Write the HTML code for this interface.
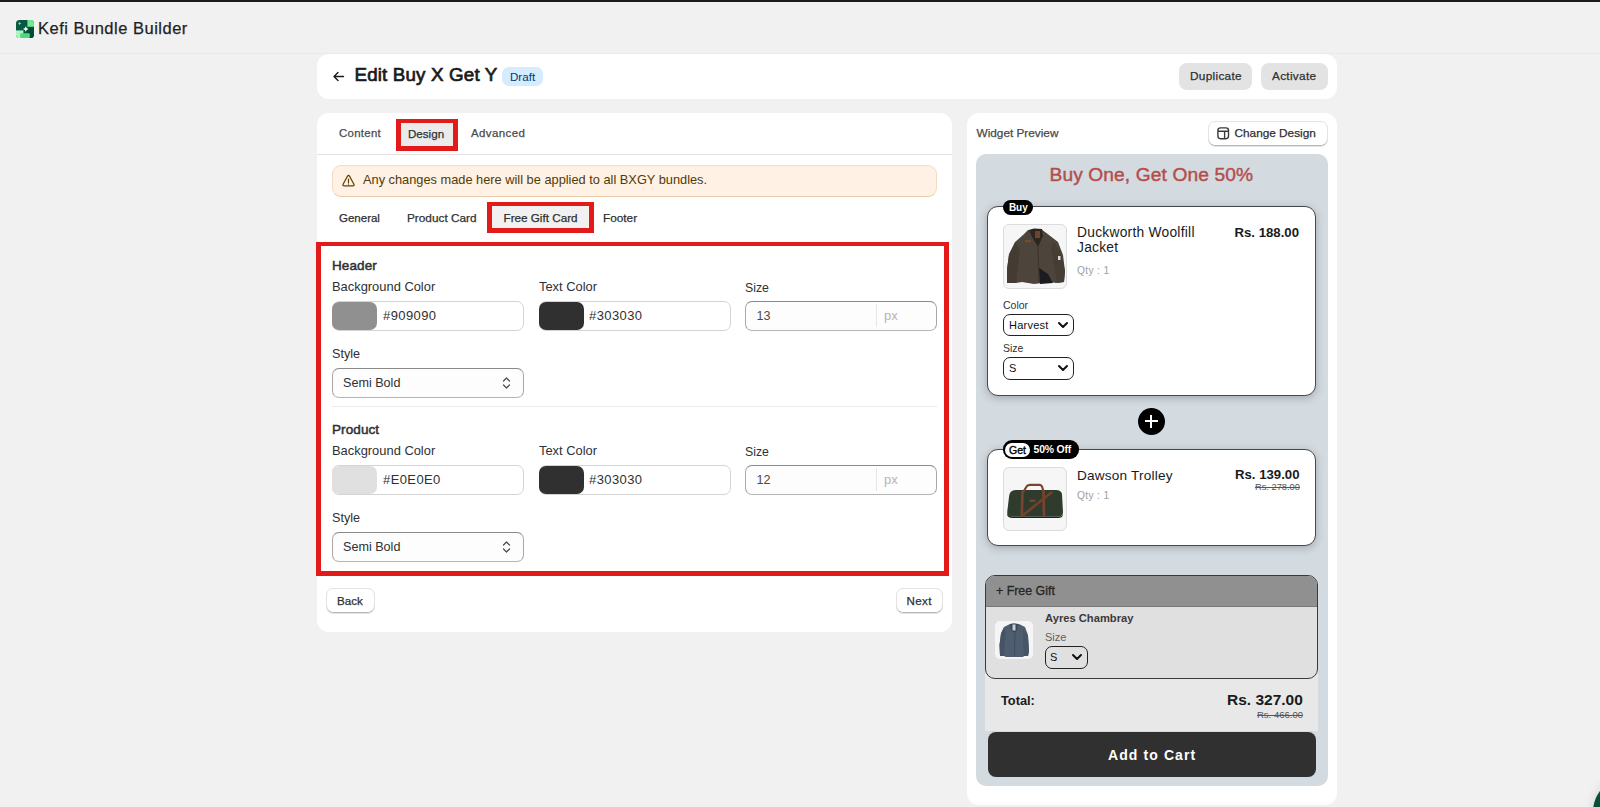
<!DOCTYPE html>
<html><head><meta charset="utf-8">
<style>
*{box-sizing:border-box;margin:0;padding:0}
html,body{width:1600px;height:807px;overflow:hidden;background:#f1f1f1;font-family:"Liberation Sans",sans-serif;color:#303030;position:relative}
.a{position:absolute}
.t{position:absolute;white-space:nowrap;line-height:1}
.card{position:absolute;background:#fff;border-radius:12px}
.med{-webkit-text-stroke:0.25px currentColor}
.inp{position:absolute;background:#fff;border:1px solid #d4d4d4;border-radius:7px}
.sw{position:absolute;border-radius:7px}
.sel{position:absolute;background:#fdfdfd;border:1px solid #8a8a8a;border-bottom-color:#b5b5b5;border-left-color:#a8a8a8;border-right-color:#a8a8a8;border-radius:7px}
.red{position:absolute;border:5px solid #e21a1a;border-top-width:4px}
</style></head>
<body>
<!-- top bar -->
<div class="a" style="left:0;top:0;width:1600px;height:2px;background:#1b1b1b"></div>
<!-- app header -->
<svg class="a" style="left:16px;top:20px" width="18" height="18" viewBox="0 0 18 18">
  <defs><clipPath id="lc"><rect x="0" y="0" width="18" height="18" rx="3.6"/></clipPath></defs>
  <g clip-path="url(#lc)">
    <rect width="18" height="18" fill="#075a3f"/>
    <rect x="11.4" y="6.8" width="6.6" height="11.2" fill="#034c34"/>
    <rect x="11.4" y="0" width="6.6" height="6.8" fill="#72e899"/>
    <rect x="0" y="10.4" width="7.4" height="7.6" fill="#aef3c3"/>
    <rect x="4.2" y="13.3" width="9.6" height="4.7" rx="1" fill="#4fd97d"/>
    <path d="M9.8 6.2 L10.7 8.1 L12.6 9 L10.7 9.9 L9.8 11.8 L8.9 9.9 L7 9 L8.9 8.1Z" fill="#f4fbf6"/>
    <path d="M3.6 1.6 L4.1 3 L5.5 3.5 L4.1 4 L3.6 5.4 L3.1 4 L1.7 3.5 L3.1 3Z" fill="#9fd6b8"/>
  </g>
</svg>
<div class="t med" style="left:38px;top:20.3px;font-size:16.5px;letter-spacing:0.5px;color:#1f1f1f">Kefi Bundle Builder</div>
<div class="a" style="left:0;top:53px;width:1600px;height:1px;background:#e9e9e9"></div>

<!-- header card -->
<div class="card" style="left:317px;top:54px;width:1020px;height:45px"></div>
<svg class="a" style="left:332px;top:70px" width="13" height="13" viewBox="0 0 13 13"><path d="M11.5 6.5H2M6 2.5L2 6.5L6 10.5" fill="none" stroke="#1a1a1a" stroke-width="1.4" stroke-linecap="round" stroke-linejoin="round"/></svg>
<div class="t" style="left:354.5px;top:66px;font-size:18.8px;letter-spacing:0.15px;color:#1a1a1a;-webkit-text-stroke:0.7px #1a1a1a">Edit Buy X Get Y</div>
<div class="a" style="left:502px;top:67px;width:41px;height:19px;background:#d5ebff;border-radius:7px"></div>
<div class="t" style="left:510px;top:70.7px;font-size:11.6px;color:#08366a">Draft</div>
<div class="a" style="left:1179px;top:63px;width:73px;height:27px;background:#e3e3e3;border-radius:8px"></div>
<div class="t med" style="left:1190px;top:70.6px;font-size:11.8px;letter-spacing:0.3px;color:#303030">Duplicate</div>
<div class="a" style="left:1261px;top:63px;width:67px;height:27px;background:#e3e3e3;border-radius:8px"></div>
<div class="t med" style="left:1272px;top:70.6px;font-size:11.8px;letter-spacing:0.3px;color:#303030">Activate</div>

<!-- left card -->
<div class="card" style="left:317px;top:113px;width:635px;height:519px"></div>
<div class="t med" style="left:339px;top:128.3px;font-size:11.4px;letter-spacing:0.3px;color:#4a4a4a">Content</div>
<div class="a" style="left:400px;top:123px;width:54px;height:24px;background:#ebebeb"></div>
<div class="red" style="left:396px;top:119px;width:62px;height:32px"></div>
<div class="t med" style="left:408px;top:128.4px;font-size:11.6px;color:#303030">Design</div>
<div class="t med" style="left:471px;top:128.3px;font-size:11.5px;letter-spacing:0.4px;color:#4a4a4a">Advanced</div>
<div class="a" style="left:317px;top:154px;width:635px;height:1px;background:#e3e3e3"></div>

<!-- banner -->
<div class="a" style="left:332px;top:165px;width:605px;height:32px;background:#fff1e3;border:1px solid #f3dcc4;border-bottom-color:#e8c9a8;border-radius:9px"></div>
<svg class="a" style="left:342px;top:174px" width="13" height="13" viewBox="0 0 13 13"><path d="M5.4 2.3 Q6.5 0.6 7.6 2.3 L11.9 10.2 Q12.6 11.9 10.8 11.9 H2.2 Q0.4 11.9 1.1 10.2 Z" fill="none" stroke="#5e4200" stroke-width="1.25" stroke-linejoin="round"/><path d="M6.5 5.2v3.6" stroke="#5e4200" stroke-width="1.2" stroke-linecap="round"/><circle cx="6.5" cy="10.1" r="0.6" fill="#5e4200"/></svg>
<div class="t" style="left:363px;top:174.1px;font-size:12.8px;color:#4f3b09">Any changes made here will be applied to all BXGY bundles.</div>

<!-- sub tabs -->
<div class="t med" style="left:339px;top:212.7px;font-size:11.5px;color:#303030">General</div>
<div class="t med" style="left:407px;top:212.7px;font-size:11.8px;color:#303030">Product Card</div>
<div class="a" style="left:491px;top:206px;width:98px;height:22px;background:#f1f1f1;border-radius:3px"></div>
<div class="red" style="left:487px;top:202px;width:107px;height:31px"></div>
<div class="t med" style="left:503.5px;top:211.7px;font-size:11.7px;color:#303030">Free Gift Card</div>
<div class="t med" style="left:603px;top:212.7px;font-size:11.8px;color:#303030">Footer</div>

<!-- red form box -->
<div class="red" style="left:316px;top:242px;width:633px;height:334px"></div>

<!-- Header section -->
<div class="t" style="left:332px;top:258.5px;font-size:13.5px;letter-spacing:0.1px;color:#303030;-webkit-text-stroke:0.5px #303030">Header</div>
<div class="t" style="left:332px;top:281px;font-size:12.9px;color:#303030">Background Color</div>
<div class="t" style="left:539px;top:281px;font-size:12.9px;color:#303030">Text Color</div>
<div class="t" style="left:745px;top:282px;font-size:12.3px;color:#303030">Size</div>
<div class="inp" style="left:332px;top:301px;width:192px;height:29.5px"></div>
<div class="sw" style="left:332px;top:302px;width:45px;height:28px;background:#909090"></div>
<div class="t" style="left:383px;top:309px;font-size:13px;letter-spacing:0.4px;color:#303030">#909090</div>
<div class="inp" style="left:539px;top:301px;width:192px;height:29.5px"></div>
<div class="sw" style="left:539px;top:302px;width:45px;height:28px;background:#303030"></div>
<div class="t" style="left:589px;top:309px;font-size:13px;letter-spacing:0.4px;color:#303030">#303030</div>
<div class="sel" style="left:745px;top:301px;width:192px;height:29.5px"></div>
<div class="a" style="left:876px;top:304px;width:1px;height:23px;background:#e6e6e6"></div>
<div class="t" style="left:756.5px;top:309.5px;font-size:12.6px;color:#4a4a4a">13</div>
<div class="t" style="left:884px;top:309px;font-size:13px;color:#b5b5b5">px</div>
<div class="t" style="left:332px;top:347.6px;font-size:12.6px;color:#303030">Style</div>
<div class="sel" style="left:332px;top:368px;width:192px;height:30px"></div>
<div class="t" style="left:343px;top:377px;font-size:12.6px;color:#303030">Semi Bold</div>
<svg class="a" style="left:501px;top:376px" width="11" height="14" viewBox="0 0 11 14"><path d="M2.5 5L5.5 2L8.5 5M2.5 9L5.5 12L8.5 9" fill="none" stroke="#4a4a4a" stroke-width="1.2" stroke-linecap="round" stroke-linejoin="round"/></svg>
<div class="a" style="left:332px;top:406px;width:605px;height:1px;background:#ebebeb"></div>

<!-- Product section -->
<div class="t" style="left:332px;top:423.2px;font-size:13.5px;letter-spacing:0.1px;color:#303030;-webkit-text-stroke:0.5px #303030">Product</div>
<div class="t" style="left:332px;top:445px;font-size:12.9px;color:#303030">Background Color</div>
<div class="t" style="left:539px;top:445px;font-size:12.9px;color:#303030">Text Color</div>
<div class="t" style="left:745px;top:446px;font-size:12.3px;color:#303030">Size</div>
<div class="inp" style="left:332px;top:465px;width:192px;height:29.5px"></div>
<div class="sw" style="left:332px;top:466px;width:45px;height:28px;background:#e0e0e0"></div>
<div class="t" style="left:383px;top:473px;font-size:13px;letter-spacing:0.4px;color:#303030">#E0E0E0</div>
<div class="inp" style="left:539px;top:465px;width:192px;height:29.5px"></div>
<div class="sw" style="left:539px;top:466px;width:45px;height:28px;background:#303030"></div>
<div class="t" style="left:589px;top:473px;font-size:13px;letter-spacing:0.4px;color:#303030">#303030</div>
<div class="sel" style="left:745px;top:465px;width:192px;height:29.5px"></div>
<div class="a" style="left:876px;top:468px;width:1px;height:23px;background:#e6e6e6"></div>
<div class="t" style="left:756.5px;top:473.5px;font-size:12.6px;color:#4a4a4a">12</div>
<div class="t" style="left:884px;top:473px;font-size:13px;color:#b5b5b5">px</div>
<div class="t" style="left:332px;top:511.6px;font-size:12.6px;color:#303030">Style</div>
<div class="sel" style="left:332px;top:532px;width:192px;height:30px"></div>
<div class="t" style="left:343px;top:541px;font-size:12.6px;color:#303030">Semi Bold</div>
<svg class="a" style="left:501px;top:540px" width="11" height="14" viewBox="0 0 11 14"><path d="M2.5 5L5.5 2L8.5 5M2.5 9L5.5 12L8.5 9" fill="none" stroke="#4a4a4a" stroke-width="1.2" stroke-linecap="round" stroke-linejoin="round"/></svg>

<!-- footer buttons -->
<div class="a" style="left:326px;top:588px;width:49px;height:26px;background:#fff;border:1px solid #e3e3e3;box-shadow:inset 0 -1px 0 #b8b8b8;border-radius:7px"></div>
<div class="t med" style="left:337px;top:594.6px;font-size:11.6px;color:#303030">Back</div>
<div class="a" style="left:896px;top:588px;width:47px;height:26px;background:#fff;border:1px solid #e3e3e3;box-shadow:inset 0 -1px 0 #b8b8b8;border-radius:7px"></div>
<div class="t med" style="left:906.5px;top:594.6px;font-size:11.6px;letter-spacing:0.4px;color:#303030">Next</div>

<!-- right card -->
<div class="card" style="left:967px;top:113px;width:370px;height:692px"></div>
<div class="t med" style="left:976.5px;top:127.8px;font-size:11.8px;color:#4a4a4a">Widget Preview</div>
<div class="a" style="left:1208px;top:121px;width:120px;height:26px;background:#fff;border:1px solid #e3e3e3;box-shadow:inset 0 -1px 0 #b8b8b8;border-radius:7px"></div>
<svg class="a" style="left:1216px;top:126px" width="14" height="14" viewBox="0 0 14 14"><rect x="1.9" y="1.9" width="10.6" height="10.8" rx="2.6" fill="none" stroke="#3a3a3a" stroke-width="1.4"/><path d="M1.9 5.3H12.5M8.6 5.3V12.7" stroke="#3a3a3a" stroke-width="1.4"/></svg>
<div class="t med" style="left:1234.5px;top:127.9px;font-size:11.8px;color:#303030">Change Design</div>

<!-- widget container -->
<div class="a" style="left:976px;top:154px;width:352px;height:632px;background:#d3dbe1;border-radius:10px"></div>
<div class="t" style="left:1049.5px;top:165.2px;font-size:19.2px;color:#b44e4c;letter-spacing:0.1px;-webkit-text-stroke:0.45px #b44e4c">Buy One, Get One 50%</div>


<!-- BUY card -->
<div class="a" style="left:987px;top:206px;width:329px;height:190px;background:#fff;border:1.2px solid #45494d;border-radius:11px;box-shadow:0 2px 8px rgba(0,0,0,0.24)"></div>
<div class="a" style="left:1003px;top:200px;width:30px;height:15px;background:#000;border-radius:8px"></div>
<div class="t" style="left:1009px;top:203px;font-size:10px;font-weight:bold;color:#fff;letter-spacing:-0.1px">Buy</div>
<div class="a" style="left:1003px;top:224px;width:64px;height:65px;background:#f6f6f6;border:1px solid #dcdcdc;border-radius:6px;overflow:hidden">
 <svg width="62" height="63" viewBox="0 0 62 63">
  <path d="M24 5 L37 4 L45 10 L54 17 L59 30 L61 46 L60 57 L52 58 L46 57 L30 59 L18 57 L12 58 L3 58 L3 44 L5 29 L11 17 L19 10 Z" fill="#4d443b"/>
  <path d="M11 18 L5 30 L3 45 L3 58 L12 58 L14 40 L16 24Z" fill="#443b33"/>
  <path d="M50 17 L57 28 L61 46 L60 57 L53 58 L50 40 L47 24Z" fill="#463d35"/>
  <path d="M25 5 L30 3.5 L38 4 L39 11 L34 22 L28 12Z" fill="#2c2621"/>
  <rect x="31" y="6" width="5" height="7" fill="#6e4430"/>
  <path d="M35 43 L44 49 L49 58 L36 59Z" fill="#1c1b21"/>
  <rect x="21" y="15" width="6" height="2.2" fill="#7a4a30"/>
  <rect x="54" y="31" width="2.5" height="4" fill="#d8d8d8"/>
  <path d="M34 22 L35 58" stroke="#3a322b" stroke-width="0.9"/>
 </svg>
</div>
<div class="t" style="left:1077px;top:224.7px;font-size:13.8px;letter-spacing:0.25px;color:#1a1a1a;line-height:15.8px">Duckworth Woolfill<br>Jacket</div>
<div class="t" style="left:1077px;top:265.5px;font-size:10.3px;letter-spacing:0.3px;color:#a0a0a0">Qty : 1</div>
<div class="t" style="left:1234.5px;top:225.9px;font-size:13.2px;font-weight:bold;color:#1a1a1a">Rs. 188.00</div>
<div class="t" style="left:1003px;top:300px;font-size:10.5px;color:#333">Color</div>
<div class="a" style="left:1003px;top:314px;width:71px;height:22px;border:1.4px solid #222;border-radius:7px;background:#fff"></div>
<div class="t" style="left:1009px;top:320px;font-size:11px;letter-spacing:0.25px;color:#111">Harvest</div>
<svg class="a" style="left:1057px;top:320px" width="12" height="10" viewBox="0 0 12 10"><path d="M2 3L6 7L10 3" fill="none" stroke="#111" stroke-width="2" stroke-linecap="round" stroke-linejoin="round"/></svg>
<div class="t" style="left:1003px;top:343px;font-size:10.5px;color:#333">Size</div>
<div class="a" style="left:1003px;top:357px;width:71px;height:23px;border:1.4px solid #222;border-radius:7px;background:#fff"></div>
<div class="t" style="left:1009px;top:363.3px;font-size:11px;color:#111">S</div>
<svg class="a" style="left:1057px;top:363px" width="12" height="10" viewBox="0 0 12 10"><path d="M2 3L6 7L10 3" fill="none" stroke="#111" stroke-width="2" stroke-linecap="round" stroke-linejoin="round"/></svg>

<!-- plus -->
<div class="a" style="left:1138px;top:408px;width:27px;height:27px;background:#000;border-radius:50%"></div>
<div class="a" style="left:1145px;top:420.3px;width:13px;height:2.1px;background:#fff"></div>
<div class="a" style="left:1150.4px;top:415px;width:2.1px;height:13px;background:#fff"></div>

<!-- GET card -->
<div class="a" style="left:987px;top:449px;width:329px;height:97px;background:#fff;border:1.2px solid #45494d;border-radius:11px;box-shadow:0 2px 8px rgba(0,0,0,0.24)"></div>
<div class="a" style="left:1003px;top:440px;width:76px;height:19px;background:#000;border-radius:9px"></div>
<div class="a" style="left:1005px;top:443px;width:25px;height:14px;background:#fff;border-radius:7px"></div>
<div class="t med" style="left:1009px;top:445px;font-size:10.5px;color:#000;-webkit-text-stroke:0.35px #000">Get</div>
<div class="t" style="left:1033.5px;top:445.3px;font-size:10.4px;font-weight:bold;color:#fff;letter-spacing:-0.15px">50% Off</div>
<div class="a" style="left:1003px;top:467px;width:64px;height:64px;background:#f6f6f6;border:1px solid #dcdcdc;border-radius:6px;overflow:hidden">
 <svg width="62" height="62" viewBox="0 0 62 62">
  <path d="M8 23 Q10 21.5 14 22 L52 22 Q57 22 58 26 L59 44 Q59 48 55 48.5 L9 48.5 Q3 48.5 3.2 44 L5 29 Q5.5 24 8 23Z" fill="#2f3b2c"/>
  <path d="M3.3 45 Q4 48.6 9 48.6 L55 48.6 Q59 48.4 59 45 L59 46.5 Q58.5 50 54 50 L9 50 Q3 50 3.2 46Z" fill="#1b2119"/>
  <path d="M18.5 25 L23 18 Q24 16.8 26 16.8 L35.5 16.8 Q37 16.8 38 18.5 L40 25" fill="none" stroke="#7b4430" stroke-width="2.2" stroke-linejoin="round"/>
  <path d="M18.5 23.5 L17.8 48.5 M39.5 23.5 L40 48.5" stroke="#7a4330" stroke-width="2.6"/>
  <path d="M18 48 L48 24" stroke="#74402c" stroke-width="2.8"/>
  <rect x="25.5" y="31.5" width="6" height="2.5" rx="0.8" fill="#7a4330"/>
 </svg>
</div>
<div class="t" style="left:1077px;top:468.5px;font-size:13.6px;letter-spacing:0.2px;color:#1a1a1a">Dawson Trolley</div>
<div class="t" style="left:1077px;top:490.5px;font-size:10.3px;letter-spacing:0.3px;color:#a0a0a0">Qty : 1</div>
<div class="t" style="left:1235px;top:468.2px;font-size:13.2px;font-weight:bold;color:#1a1a1a">Rs. 139.00</div>
<div class="t" style="left:1255px;top:483.3px;font-size:9.3px;color:#555;text-decoration:line-through">Rs. 278.00</div>

<!-- footer grey area -->
<div class="a" style="left:985px;top:600px;width:333px;height:131px;background:#e8e8e8"></div>
<!-- free gift box -->
<div class="a" style="left:985px;top:575px;width:333px;height:104px;background:#e0e0e0;border:1.2px solid #3a3a3a;border-radius:10px;overflow:hidden">
  <div style="position:absolute;left:0;top:0;width:100%;height:31px;background:#909090;border-bottom:1px solid #777"></div>
</div>
<div class="t" style="left:996px;top:584.5px;font-size:12.4px;color:#262626;-webkit-text-stroke:0.3px #262626">+ Free Gift</div>
<div class="a" style="left:995px;top:621px;width:38px;height:38px;background:#f5f5f5;border-radius:5px;overflow:hidden">
 <svg width="38" height="38" viewBox="0 0 38 38">
  <path d="M15 3 L19 2.5 L24 3 L30 6 L33 14 L34 30 L33 35 L29 35 L28 36 L11 36 L9 35 L5 35 L4.5 24 L6 12 L9 6Z" fill="#4f5d70"/>
  <path d="M9 7 L6 13 L4.5 24 L5 35 L9 35 L10 20 L11 12Z" fill="#465365"/>
  <path d="M28 8 L33 16 L34 30 L33 35 L29 35 L28 20Z" fill="#485568"/>
  <path d="M15 3 L19 2.5 L23 3 L22 9 L19 12 L16 9Z" fill="#3c4655"/>
  <rect x="17.5" y="3.5" width="3" height="6" fill="#c9cdd2"/>
  <path d="M20 12 L19.5 35" stroke="#3d4859" stroke-width="0.8"/>
 </svg>
</div>
<div class="t" style="left:1045px;top:613px;font-size:11.2px;font-weight:bold;color:#3a3a3a">Ayres Chambray</div>
<div class="t" style="left:1045px;top:631.5px;font-size:11px;color:#606060">Size</div>
<div class="a" style="left:1045px;top:646px;width:43px;height:23px;border:1.4px solid #222;border-radius:7px;background:#e0e0e0"></div>
<div class="t" style="left:1050px;top:652px;font-size:11px;color:#111">S</div>
<svg class="a" style="left:1071px;top:652px" width="12" height="10" viewBox="0 0 12 10"><path d="M2 3L6 7L10 3" fill="none" stroke="#111" stroke-width="2" stroke-linecap="round" stroke-linejoin="round"/></svg>

<div class="t" style="left:1001px;top:694.9px;font-size:12.8px;font-weight:bold;color:#1a1a1a">Total:</div>
<div class="t" style="left:1227px;top:692px;font-size:15.5px;font-weight:bold;color:#1a1a1a">Rs. 327.00</div>
<div class="t" style="left:1257px;top:709.5px;font-size:9.5px;color:#555;text-decoration:line-through">Rs. 466.00</div>

<div class="a" style="left:988px;top:732px;width:328px;height:45px;background:#303030;border-radius:8px"></div>
<div class="t" style="left:1108px;top:747.8px;font-size:14px;font-weight:bold;color:#fff;letter-spacing:1.1px">Add to Cart</div>

<!-- chat bubble -->
<div class="a" style="left:1593px;top:777px;width:70px;height:70px;border-radius:50%;background:#0b4d3b;box-shadow:0 0 12px rgba(0,0,0,0.12)"></div>

</body></html>
